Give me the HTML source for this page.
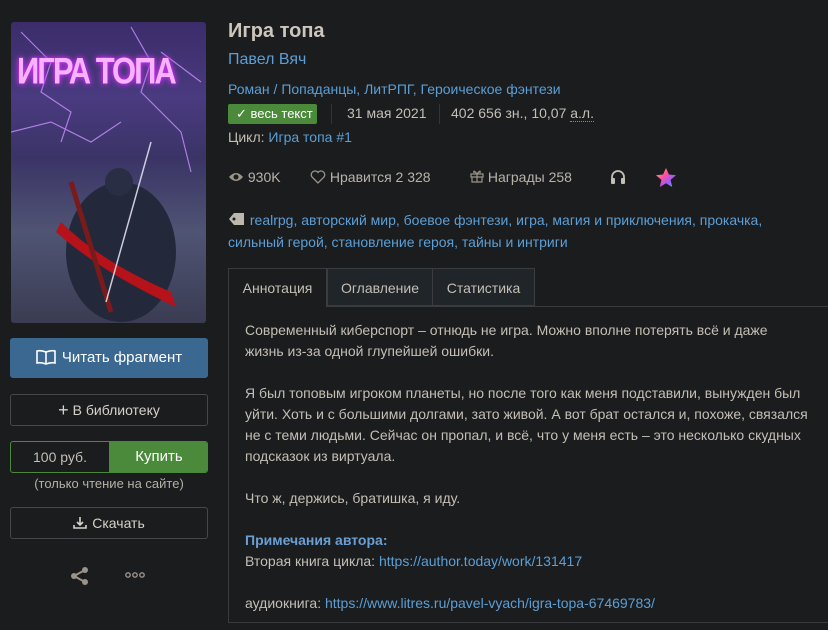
<!DOCTYPE html>
<html><head><meta charset="utf-8"><style>
*{margin:0;padding:0;box-sizing:border-box}
body{width:828px;height:630px;background:#1b1c1e;font-family:"Liberation Sans",sans-serif;color:#c4bfb5;font-size:14px;position:relative;overflow:hidden}
.a{position:absolute;white-space:nowrap}
a,.l{color:#5b9fd6;text-decoration:none}
.btn{position:absolute;left:10px;width:198px;border:1px solid #45474a;border-radius:3px;text-align:center;color:#d6d2ca;font-size:14px}
</style></head><body>
<div class="a" style="left:11px;top:22px;width:195px;height:301px;border-radius:3px;overflow:hidden;background:linear-gradient(180deg,#3b2c6a 0%,#4a3a80 25%,#3a3466 45%,#505474 70%,#3a3c52 100%)">
<svg width="195" height="301" style="position:absolute;left:0;top:0">
<g stroke="#c890ff" stroke-width="1.2" fill="none" opacity=".8">
<path d="M10 10 L40 40 L30 70 L60 90 L50 120"/><path d="M120 5 L140 40 L130 70 L170 110 L180 150"/><path d="M0 110 L40 100 L80 120 L110 100"/><path d="M150 30 L190 60"/></g>
<ellipse cx="110" cy="230" rx="55" ry="70" fill="#23283a"/>
<circle cx="108" cy="160" r="14" fill="#2a2e45"/>
<path d="M50 200 Q90 240 160 270 L165 285 Q90 250 45 210Z" fill="#b5121a"/>
<path d="M60 160 L100 290" stroke="#7a1b1b" stroke-width="5"/>
<path d="M140 120 L95 280" stroke="#ccd" stroke-width="1.5"/>
</svg>
<div style="position:absolute;left:6px;top:28px;font-size:31px;font-weight:bold;color:#f7b3ff;text-shadow:0 0 6px #e040ff,0 0 3px #c000ff;letter-spacing:-2px;transform:scaleY(1.2);transform-origin:top left">ИГРА ТОПА</div>
</div>
<div class="btn" style="top:338px;height:40px;line-height:38px;background:#3a6891;border-color:#3a6891;color:#fff;font-size:15px">
<svg width="20" height="16" viewBox="0 0 20 16" style="vertical-align:-3px;margin-right:6px"><path d="M1 2 Q5 1 10 3 Q15 1 19 2 V14 Q15 13 10 15 Q5 13 1 14Z M10 3 V15" fill="none" stroke="#fff" stroke-width="1.6"/></svg>Читать фрагмент</div>
<div class="btn" style="top:394px;height:32px;line-height:30px"><span style="font-size:18px;vertical-align:-1px;margin-right:4px">+</span>В библиотеку</div>
<div class="a" style="left:10px;top:441px;width:198px;height:32px;border:1px solid #4a8a3a;border-radius:3px;overflow:hidden">
<div class="a" style="left:0;top:0;width:98px;height:30px;line-height:30px;text-align:center;color:#c4bfb5">100 руб.</div>
<div class="a" style="left:98px;top:0;width:100px;height:30px;line-height:30px;text-align:center;background:#4b8a3b;color:#fff;font-size:15px">Купить</div></div>
<div class="a" style="left:10px;top:476px;width:198px;text-align:center;font-size:13px;color:#b5b0a6">(только чтение на сайте)</div>
<div class="btn" style="top:507px;height:32px;line-height:30px"><svg width="14" height="14" viewBox="0 0 14 14" style="vertical-align:-2px;margin-right:5px"><path d="M7 1 V9 M4 6 L7 9 L10 6 M1 9 V12 H13 V9" fill="none" stroke="#d6d2ca" stroke-width="1.6"/></svg>Скачать</div>
<svg class="a" style="left:69px;top:565px" width="22" height="22" viewBox="0 0 22 22"><circle cx="16" cy="5" r="3" fill="#9a9388"/><circle cx="5" cy="11" r="3" fill="#9a9388"/><circle cx="16" cy="17" r="3" fill="#9a9388"/><path d="M16 5 L5 11 L16 17" stroke="#9a9388" stroke-width="2" fill="none"/></svg>
<svg class="a" style="left:125px;top:572px" width="20" height="6" viewBox="0 0 20 6"><circle cx="3" cy="3" r="2.2" fill="none" stroke="#9a9388" stroke-width="1.4"/><circle cx="10" cy="3" r="2.2" fill="none" stroke="#9a9388" stroke-width="1.4"/><circle cx="17" cy="3" r="2.2" fill="none" stroke="#9a9388" stroke-width="1.4"/></svg>

<div class="a" style="left:228px;top:20px;font-size:20px;font-weight:bold;color:#ccc6bc">Игра топа</div>
<div class="a l" style="left:228px;top:51px;font-size:16px">Павел Вяч</div>
<div class="a l" style="left:228px;top:81px">Роман / Попаданцы, ЛитРПГ, Героическое фэнтези</div>
<div class="a" style="left:228px;top:104px;width:89px;height:20px;background:#4b8a3b;border-radius:2px;color:#fff;font-size:13px;line-height:20px;padding-left:8px">✓ весь текст</div>
<div class="a" style="left:331px;top:104px;width:1px;height:20px;background:#2e3540"></div>
<div class="a" style="left:347px;top:105px">31 мая 2021</div>
<div class="a" style="left:439px;top:104px;width:1px;height:20px;background:#2e3540"></div>
<div class="a" style="left:451px;top:105px">402 656 зн., 10,07 <span style="border-bottom:1px dotted #888">а.л.</span></div>
<div class="a" style="left:228px;top:129px">Цикл: <span class="l">Игра топа #1</span></div>
<div class="a" style="left:228px;top:169px;color:#b8b3a9"><svg width="16" height="12" viewBox="0 0 16 12" style="vertical-align:-1px"><path d="M1 6 Q8 -2 15 6 Q8 14 1 6Z" fill="#9a9388"/><circle cx="8" cy="6" r="2.5" fill="#1b1c1e"/></svg> 930K</div>
<div class="a" style="left:310px;top:169px;color:#b8b3a9"><svg width="16" height="14" viewBox="0 0 16 14" style="vertical-align:-2px"><path d="M8 13 L2 7 A3.5 3.5 0 0 1 8 2.5 A3.5 3.5 0 0 1 14 7Z" fill="none" stroke="#9a9388" stroke-width="1.3"/></svg> Нравится 2 328</div>
<div class="a" style="left:470px;top:169px;color:#b8b3a9"><svg width="14" height="14" viewBox="0 0 14 14" style="vertical-align:-1px"><path d="M1 5 H13 V8 H1Z M2 8 V13 H12 V8 M7 5 V13 M7 5 Q3 0 4 4 M7 5 Q11 0 10 4" fill="none" stroke="#9a9388" stroke-width="1.2"/></svg> Награды 258</div>
<svg class="a" style="left:610px;top:169px" width="16" height="16" viewBox="0 0 16 16"><path d="M2 11 V8 A6 6 0 0 1 14 8 V11" fill="none" stroke="#c4bfb5" stroke-width="1.8"/><rect x="1" y="9" width="4" height="6" rx="1" fill="#c4bfb5"/><rect x="11" y="9" width="4" height="6" rx="1" fill="#c4bfb5"/></svg>
<svg class="a" style="left:655px;top:167px" width="22" height="22" viewBox="0 0 22 22"><defs><linearGradient id="g" x1="0" y1="0" x2="1" y2="1"><stop offset="0" stop-color="#ffd23a"/><stop offset=".4" stop-color="#ff4fa0"/><stop offset=".7" stop-color="#9a5cff"/><stop offset="1" stop-color="#37c6ff"/></linearGradient></defs><path d="M11 1 L13.9 7.5 L21 8.2 L15.6 12.9 L17.2 20 L11 16.3 L4.8 20 L6.4 12.9 L1 8.2 L8.1 7.5Z" fill="url(#g)"/></svg>
<div class="a" style="left:228px;top:209px;line-height:22px"><svg width="18" height="14" viewBox="0 0 18 14" style="vertical-align:-1px"><path d="M1 7 L6 1 H16 V13 H6Z" fill="#bdb8ad"/><circle cx="6" cy="7" r="1.5" fill="#1b1c1e"/></svg> <span class="l">realrpg, авторский мир, боевое фэнтези, игра, магия и приключения, прокачка,</span><br><span class="l">сильный герой, становление героя, тайны и интриги</span></div>

<div class="a" style="left:228px;top:306px;width:601px;height:317px;border:1px solid #3a3c3f;border-right:none"></div>
<div class="a" style="left:228px;top:268px;width:99px;height:39px;border:1px solid #3a3c3f;border-bottom:none;background:#1b1c1e;line-height:38px;text-align:center;color:#c4bfb5">Аннотация</div>
<div class="a" style="left:327px;top:268px;width:106px;height:38px;border:1px solid #3a3c3f;background:#202529;line-height:38px;text-align:center">Оглавление</div>
<div class="a" style="left:433px;top:268px;width:102px;height:38px;border:1px solid #3a3c3f;border-left:none;background:#202529;line-height:38px;text-align:center">Статистика</div>
<div class="a" style="left:245px;top:320px;line-height:21px;font-size:14px">Современный киберспорт – отнюдь не игра. Можно вполне потерять всё и даже<br>жизнь из-за одной глупейшей ошибки.<br><br>Я был топовым игроком планеты, но после того как меня подставили, вынужден был<br>уйти. Хоть и с большими долгами, зато живой. А вот брат остался и, похоже, связался<br>не с теми людьми. Сейчас он пропал, и всё, что у меня есть – это несколько скудных<br>подсказок из виртуала.<br><br>Что ж, держись, братишка, я иду.<br><br><b class="l" style="color:#6a9fd4">Примечания автора:</b><br>Вторая книга цикла: <span class="l">https://author.today/work/131417</span><br><br>аудиокнига: <span class="l">https://www.litres.ru/pavel-vyach/igra-topa-67469783/</span></div>
</body></html>
